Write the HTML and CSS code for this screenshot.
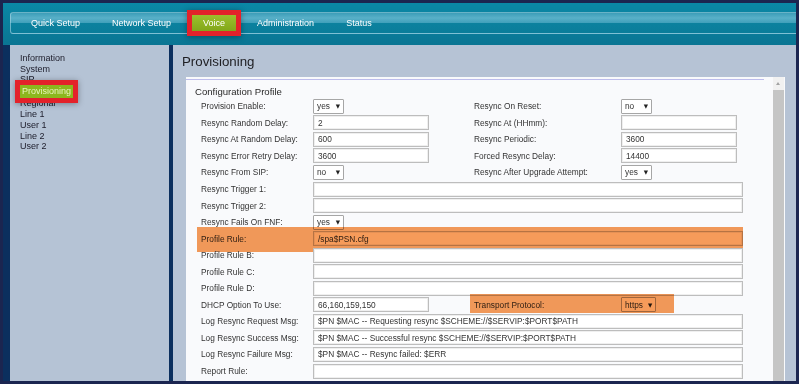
FILE: index.html
```html
<!DOCTYPE html>
<html lang="en">
<head>
    <meta charset="UTF-8">
    <meta name="viewport" content="width=device-width, initial-scale=1.0">
    <title>Provisioning</title>
    <link rel="stylesheet" href="styles.css">
</head>
<body>
    <div class="frame">
        <div class="header">
            <div class="nav">
                <span class="nav-item">Quick Setup</span>
                <span class="nav-item">Network Setup</span>
                <span class="nav-item nav-active">Voice</span>
                <span class="nav-item">Administration</span>
                <span class="nav-item">Status</span>
            </div>
        </div>

        <div class="body">
            <div class="sidebar">
                <div class="side-item">Information</div>
                <div class="side-item">System</div>
                <div class="side-item">SIP</div>
                <div class="side-item side-active"><span>Provisioning</span></div>
                <div class="side-item">Regional</div>
                <div class="side-item">Line 1</div>
                <div class="side-item">User 1</div>
                <div class="side-item">Line 2</div>
                <div class="side-item">User 2</div>
            </div>

            <div class="main">
                <h1 class="title">Provisioning</h1>
                <div class="content-box">
                    <div class="content">
                        <div class="rule"></div>
                        <h2 class="section">Configuration Profile</h2>

                        <div class="row">
                            <span class="label">Provision Enable:</span>
                            <div class="field"><div class="select"><span>yes</span><span class="arrow">▼</span></div></div>
                            <span class="label label-right">Resync On Reset:</span>
                            <div class="field"><div class="select"><span>no</span><span class="arrow">▼</span></div></div>
                        </div>
                        <div class="row">
                            <span class="label">Resync Random Delay:</span>
                            <div class="field"><input class="text" type="text" value="2"></div>
                            <span class="label label-right">Resync At (HHmm):</span>
                            <div class="field"><input class="text" type="text" value=""></div>
                        </div>
                        <div class="row">
                            <span class="label">Resync At Random Delay:</span>
                            <div class="field"><input class="text" type="text" value="600"></div>
                            <span class="label label-right">Resync Periodic:</span>
                            <div class="field"><input class="text" type="text" value="3600"></div>
                        </div>
                        <div class="row">
                            <span class="label">Resync Error Retry Delay:</span>
                            <div class="field"><input class="text" type="text" value="3600"></div>
                            <span class="label label-right">Forced Resync Delay:</span>
                            <div class="field"><input class="text" type="text" value="14400"></div>
                        </div>
                        <div class="row">
                            <span class="label">Resync From SIP:</span>
                            <div class="field"><div class="select"><span>no</span><span class="arrow">▼</span></div></div>
                            <span class="label label-right">Resync After Upgrade Attempt:</span>
                            <div class="field"><div class="select"><span>yes</span><span class="arrow">▼</span></div></div>
                        </div>
                        <div class="row">
                            <span class="label">Resync Trigger 1:</span>
                            <div class="field field-long"><input class="text" type="text" value=""></div>
                        </div>
                        <div class="row">
                            <span class="label">Resync Trigger 2:</span>
                            <div class="field field-long"><input class="text" type="text" value=""></div>
                        </div>
                        <div class="row">
                            <span class="label">Resync Fails On FNF:</span>
                            <div class="field"><div class="select"><span>yes</span><span class="arrow">▼</span></div></div>
                        </div>
                        <div class="row mark-rule">
                            <span class="label">Profile Rule:</span>
                            <div class="field field-long"><input class="text" type="text" value="/spa$PSN.cfg"></div>
                        </div>
                        <div class="row">
                            <span class="label">Profile Rule B:</span>
                            <div class="field field-long"><input class="text" type="text" value=""></div>
                        </div>
                        <div class="row">
                            <span class="label">Profile Rule C:</span>
                            <div class="field field-long"><input class="text" type="text" value=""></div>
                        </div>
                        <div class="row">
                            <span class="label">Profile Rule D:</span>
                            <div class="field field-long"><input class="text" type="text" value=""></div>
                        </div>
                        <div class="row mark-transport">
                            <span class="label">DHCP Option To Use:</span>
                            <div class="field"><input class="text" type="text" value="66,160,159,150"></div>
                            <span class="label label-right">Transport Protocol:</span>
                            <div class="field"><div class="select"><span>https</span><span class="arrow">▼</span></div></div>
                        </div>
                        <div class="row">
                            <span class="label">Log Resync Request Msg:</span>
                            <div class="field field-long"><input class="text" type="text" value="$PN $MAC -- Requesting resync $SCHEME://$SERVIP:$PORT$PATH"></div>
                        </div>
                        <div class="row">
                            <span class="label">Log Resync Success Msg:</span>
                            <div class="field field-long"><input class="text" type="text" value="$PN $MAC -- Successful resync $SCHEME://$SERVIP:$PORT$PATH"></div>
                        </div>
                        <div class="row">
                            <span class="label">Log Resync Failure Msg:</span>
                            <div class="field field-long"><input class="text" type="text" value="$PN $MAC -- Resync failed: $ERR"></div>
                        </div>
                        <div class="row">
                            <span class="label">Report Rule:</span>
                            <div class="field field-long"><input class="text" type="text" value=""></div>
                        </div>
                    </div>
                    <div class="scrollbar">
                        <div class="scroll-up"></div>
                        <div class="scroll-thumb"></div>
                    </div>
                </div>
            </div>
        </div>
    </div>
</body>
</html>
```

FILE: styles.css
```css
body {
    margin: 0;
    width: 799px;
    height: 384px;
    overflow: hidden;
    background-color: #1b2550;
    font-family: 'Liberation Sans', Arial, sans-serif;
}

.frame {
    margin: 3px 0 0 3px;
    width: 793px;
    height: 378px;
    background-color: #0b2f5e;
    display: flex;
    flex-direction: column;
    overflow: hidden;
}

/* top bar */
.header {
    height: 42px;
    box-sizing: border-box;
    padding: 9px 0 0 7px;
    background: linear-gradient(to bottom, #0a88a6, #0a7593);
}

.nav {
    height: 22px;
    box-sizing: border-box;
    border: 1px solid rgba(170, 215, 230, 0.6);
    border-right: none;
    border-radius: 3px 0 0 3px;
    background: linear-gradient(to bottom, #3c9db8 0%, #58b0c8 25%, #3f9fba 50%, #0b819e 52%, #0a7d9a 100%);
    display: flex;
    align-items: center;
    gap: 32px;
    padding-left: 20px;
}

.nav-item {
    color: #ffffff;
    font-size: 9px;
    line-height: 16px;
}

.nav-active {
    position: relative;
    margin: 0 -11px;
    padding: 0 11px;
    background: linear-gradient(to bottom, #9cc02c, #82a71a);
    box-shadow: 0 0 0 5px #e3222a, 0 1px 6px 5px rgba(0, 0, 0, 0.35);
}

/* body */
.body {
    flex: 1;
    display: flex;
    gap: 4px;
    padding-left: 7px;
    min-height: 0;
}

.sidebar {
    width: 159px;
    background-color: #b5c3d5;
    padding: 8px 0 0 10px;
    box-sizing: border-box;
}

.side-item {
    font-size: 9px;
    line-height: 10.7px;
    color: #1c1c2a;
}

.side-active {
    position: relative;
    z-index: 1;
}

.side-active span {
    display: inline-block;
    padding: 1.3px 2px;
    background-color: #8cb71e;
    color: #e9f5bb;
    box-shadow: 0 0 0 5px #e3222a, 0 1px 6px 5px rgba(0, 0, 0, 0.35);
}

.main {
    flex: 1;
    background-color: #b6c3d5;
    padding: 0 11px 0 13px;
    display: flex;
    flex-direction: column;
    min-height: 0;
}

.title {
    margin: 0;
    height: 32px;
    line-height: 33px;
    font-size: 13.3px;
    font-weight: normal;
    color: #1e1e22;
    padding-left: 0;
    margin-left: -4px;
}

.content-box {
    flex: 1;
    background-color: #f9fafc;
    display: flex;
    min-height: 0;
    overflow: hidden;
}

.content {
    flex: 1;
    padding-top: 2px;
}

.rule {
    height: 1px;
    margin-right: 9px;
    background-color: #bdbdec;
}

.section {
    margin: 6px 0 0 9px;
    font-size: 9.6px;
    line-height: 12px;
    font-weight: normal;
    color: #2a2a2a;
}

/* form rows */
.row {
    position: relative;
    display: grid;
    grid-template-columns: 116px 157px 151px 122px;
    height: 16.55px;
    align-items: center;
    margin-left: 11px;
}

.label {
    padding-left: 4px;
    font-size: 8.3px;
    color: #333333;
    white-space: nowrap;
}

.label-right {
    padding-left: 4px;
}

.field {
    display: flex;
    align-items: center;
}

.field-long {
    grid-column: 2 / 5;
}

.text {
    box-sizing: border-box;
    width: 116px;
    height: 15px;
    margin: 0;
    padding: 0 0 0 4px;
    border: 1px solid #bdbdbd;
    box-shadow: inset 0 0 0 1px #efefef;
    background-color: #ffffff;
    font-family: 'Liberation Sans', Arial, sans-serif;
    font-size: 8.3px;
    color: #333333;
    outline: none;
}

.field-long .text {
    width: 430px;
}

.select {
    box-sizing: border-box;
    min-width: 31px;
    height: 15px;
    padding: 0 3px;
    border: 1px solid #a6a6a6;
    border-radius: 1px;
    background-color: #ffffff;
    display: flex;
    align-items: center;
    justify-content: space-between;
    gap: 5px;
    font-size: 8.3px;
    color: #333333;
}

.arrow {
    font-family: 'DejaVu Sans', sans-serif;
    font-size: 5.5px;
    color: #222222;
}

/* orange marks drawn over the form */
.mark-rule::after,
.mark-transport::after {
    content: '';
    position: absolute;
    background-color: #f69b5a;
    mix-blend-mode: multiply;
}

.mark-rule::after {
    left: 0;
    top: -3.5px;
    width: 546px;
    height: 25px;
}

.mark-transport::after {
    left: 273px;
    top: -2.5px;
    width: 204px;
    height: 19px;
}

/* fake scrollbar */
.scrollbar {
    width: 11px;
    margin-right: 1px;
    display: flex;
    flex-direction: column;
}

.scroll-up {
    height: 13px;
    background-color: #f1f1f1;
    position: relative;
}

.scroll-up::after {
    content: '';
    position: absolute;
    left: 3px;
    top: 5px;
    border-left: 2.5px solid transparent;
    border-right: 2.5px solid transparent;
    border-bottom: 3px solid #a3a3a3;
}

.scroll-thumb {
    flex: 1;
    background-color: #c5c5c5;
}
```
